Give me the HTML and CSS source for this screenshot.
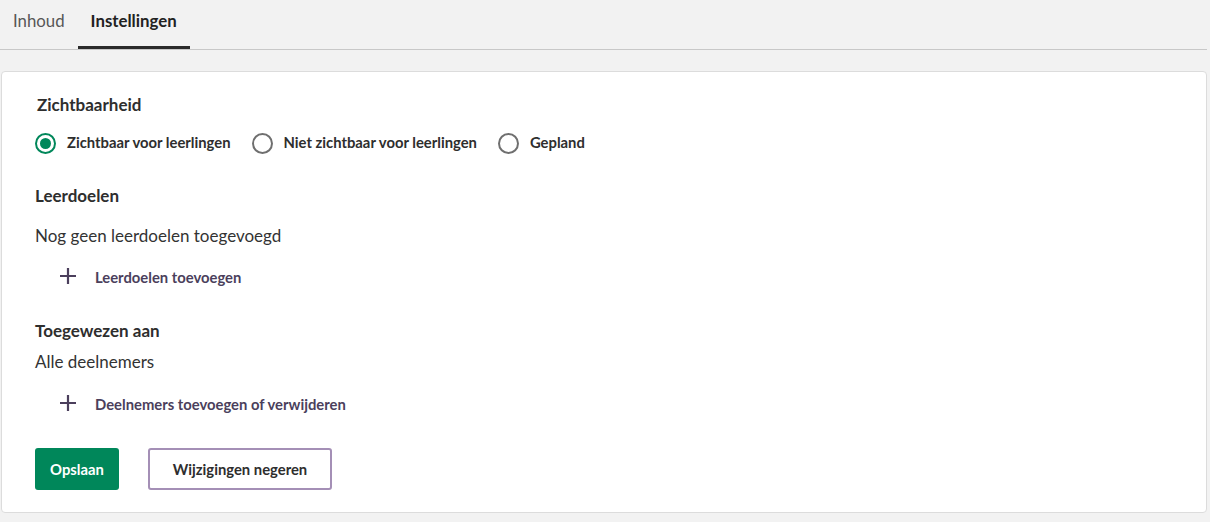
FILE: index.html
```html
<!DOCTYPE html>
<html lang="nl">
<head>
<meta charset="utf-8">
<title>Instellingen</title>
<link rel="stylesheet" href="styles.css">
</head>
<body>
<div class="page">
  <nav class="tabs">
    <div class="tab">Inhoud</div>
    <div class="tab active">Instellingen</div>
  </nav>
  <main class="card">
    <h2 class="legend">Zichtbaarheid</h2>
    <div class="radios">
      <label class="radio-item"><span class="radio checked"></span><span class="radio-label">Zichtbaar voor leerlingen</span></label>
      <label class="radio-item"><span class="radio"></span><span class="radio-label">Niet zichtbaar voor leerlingen</span></label>
      <label class="radio-item"><span class="radio"></span><span class="radio-label">Gepland</span></label>
    </div>

    <h2 class="heading h-goals">Leerdoelen</h2>
    <p class="text t-goals">Nog geen leerdoelen toegevoegd</p>
    <div class="link l-goals">
      <svg class="plus" width="16" height="16" viewBox="0 0 16 16"><path d="M8 0V16M0 8H16" stroke="#4b3f5c" stroke-width="2.2"/></svg>
      <span>Leerdoelen toevoegen</span>
    </div>

    <h2 class="heading h-assigned">Toegewezen aan</h2>
    <p class="text t-assigned">Alle deelnemers</p>
    <div class="link l-assigned">
      <svg class="plus" width="16" height="16" viewBox="0 0 16 16"><path d="M8 0V16M0 8H16" stroke="#4b3f5c" stroke-width="2.2"/></svg>
      <span>Deelnemers toevoegen of verwijderen</span>
    </div>

    <div class="actions">
      <button class="btn primary">Opslaan</button>
      <button class="btn secondary">Wijzigingen negeren</button>
    </div>
  </main>
</div>
</body>
</html>
```

FILE: styles.css
```css
html, body {
  margin: 0;
  padding: 0;
  background: #f2f2f2;
  font-family: Lato, "Open Sans", "Liberation Sans", sans-serif;
  color: #333333;
}

.page {
  width: 1207px;
}

.tabs {
  display: flex;
  border-bottom: 1px solid #c8c8c8;
}

.tab {
  padding: 10px 13px 14px;
  font-size: 16.8px;
  line-height: 22px;
  color: #575757;
  border-bottom: 3px solid transparent;
}

.tab.active {
  font-weight: 700;
  color: #222222;
  border-bottom-color: #2b2b2b;
}

.card {
  display: block;
  margin: 21px 0 0 1px;
  background: #ffffff;
  border: 1px solid #dcdcdc;
  border-radius: 4px;
  padding: 22px 33px 22px;
}

.legend,
.heading {
  margin: 0;
  font-size: 17px;
  line-height: 22px;
  font-weight: 700;
  color: #2e2e2e;
}

.legend {
  padding-left: 2px;
}

.radios {
  display: flex;
  align-items: center;
  gap: 21px;
  margin-top: 16px;
  height: 22px;
}

.radio-item {
  display: flex;
  align-items: center;
  gap: 11px;
}

.radio {
  box-sizing: border-box;
  width: 21px;
  height: 21px;
  border: 2px solid #6f6f6f;
  border-radius: 50%;
  display: flex;
  align-items: center;
  justify-content: center;
  flex: none;
}

.radio.checked {
  border-color: #00875a;
}

.radio.checked::after {
  content: "";
  width: 11px;
  height: 11px;
  border-radius: 50%;
  background: #00875a;
}

.radio-label {
  font-size: 14.8px;
  line-height: 20px;
  font-weight: 700;
  color: #2e2e2e;
  position: relative;
  top: -1px;
}

.h-goals { margin-top: 31px; }
.h-assigned { margin-top: 33px; }

.text {
  margin: 0;
  font-size: 17px;
  line-height: 22px;
  color: #333333;
}

.t-goals { margin-top: 18px; }
.t-assigned { margin-top: 9px; }

.link {
  display: flex;
  align-items: center;
  gap: 19px;
  margin-left: 25px;
  font-size: 14.8px;
  line-height: 20px;
  font-weight: 700;
  color: #4b3f5c;
}

.plus {
  flex: none;
  position: relative;
  top: -1px;
}

.l-goals { margin-top: 20px; }
.l-assigned { margin-top: 21px; }

.actions {
  display: flex;
  gap: 29px;
  margin-top: 34px;
}

.btn {
  box-sizing: border-box;
  height: 42px;
  border-radius: 3px;
  font-family: Lato, "Open Sans", "Liberation Sans", sans-serif;
  font-size: 14.8px;
  font-weight: 700;
  padding: 0;
  cursor: pointer;
}

.btn.primary {
  width: 84px;
  background: #00875a;
  border: none;
  color: #ffffff;
}

.btn.secondary {
  width: 184px;
  background: #ffffff;
  border: 2px solid #a48fb6;
  color: #2e2e2e;
}
```
